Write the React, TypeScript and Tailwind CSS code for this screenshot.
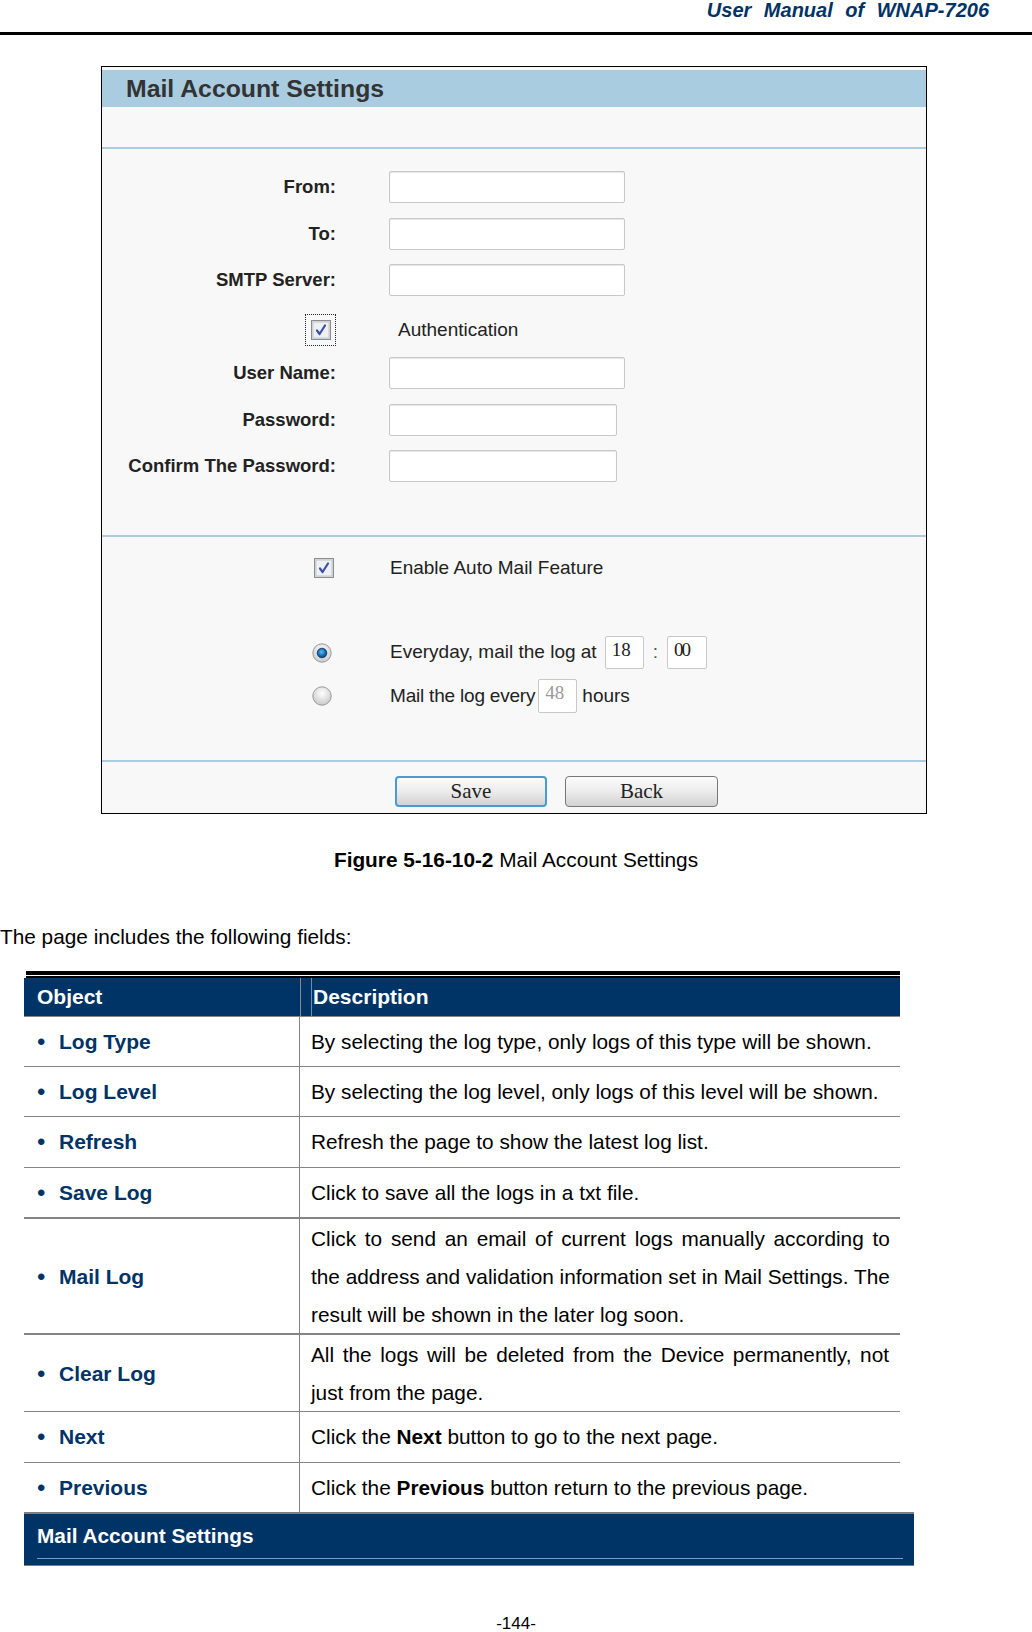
import React from "react";

const Checkbox = () => (
  <svg width="20" height="20" viewBox="0 0 20 20" className="block">
    <rect x="0.5" y="0.5" width="19" height="19" fill="#dcdcdc" stroke="#8c8c8c" />
    <rect x="2" y="2" width="16" height="16" fill="#eef0f6" stroke="#c4c6cc" />
    <path d="M6 10.5 L8.6 14 L14 5.5" fill="none" stroke="#3a50a8" strokeWidth="2.2" strokeLinecap="round" strokeLinejoin="round" />
  </svg>
);

const Radio = ({ on }: { on: boolean }) => (
  <svg width="20" height="20" viewBox="0 0 20 20" className="block">
    <defs>
      <radialGradient id={on ? "rgOn" : "rgOff"} cx="50%" cy="35%" r="65%">
        <stop offset="0%" stopColor="#ffffff" />
        <stop offset="100%" stopColor="#c9c9c9" />
      </radialGradient>
      <radialGradient id="rgDot" cx="45%" cy="40%" r="60%">
        <stop offset="0%" stopColor="#5ec0f0" />
        <stop offset="60%" stopColor="#1670b8" />
        <stop offset="100%" stopColor="#0a3f72" />
      </radialGradient>
    </defs>
    <circle cx="10" cy="10" r="9.2" fill={on ? "url(#rgOn)" : "url(#rgOff)"} stroke="#9a9a9a" strokeWidth="1" />
    {on && <circle cx="10" cy="10" r="4.8" fill="url(#rgDot)" stroke="#0a2f5a" strokeWidth="0.8" />}
  </svg>
);

const Field = ({ w = 236 }: { w?: number }) => (
  <div
    className={`h-[32px] rounded-[2px] border border-[#c8c8c8] bg-white shadow-[inset_0_1px_1px_rgba(0,0,0,0.10)] ${
      w === 236 ? "w-[236px]" : "w-[228px]"
    }`}
  />
);

const FormRow = ({ label, w }: { label: string; w?: number }) => (
  <div className="grid h-[46.5px] grid-cols-[234px_1fr] items-center gap-x-[53px]">
    <div className="whitespace-nowrap text-right text-[18.5px] font-bold text-[#222]">{label}</div>
    <Field w={w} />
  </div>
);

type RowProps = {
  h: string;
  thick?: boolean;
  name: string;
  children: React.ReactNode;
  multi?: boolean;
};

const Name = ({ name }: { name: string }) => (
  <div className="flex items-center border-r border-[#858585] pl-[13px]">
    <span className="w-[22px] text-[24px] leading-[20px] text-[#003366]">•</span>
    <span className="text-[21px] font-bold text-[#003366]">{name}</span>
  </div>
);

const TRow = ({ h, thick, name, children, multi }: RowProps) => (
  <div
    className={`grid grid-cols-[276px_1fr] ${h} ${thick ? "border-b-2" : "border-b"} border-[#858585]`}
  >
    <Name name={name} />
    <div
      className={`pl-[11px] pr-[11px] text-[20.8px] text-black ${
        multi ? "pt-[1px] leading-[38px]" : "flex items-center"
      }`}
    >
      {children}
    </div>
  </div>
);

const J = ({ children }: { children: React.ReactNode }) => (
  <div className="whitespace-nowrap text-justify [text-align-last:justify]">{children}</div>
);

export default function App() {
  return (
    <div className="relative h-[1632px] w-[1032px] overflow-hidden bg-white font-['Liberation_Sans',Arial,sans-serif] text-black">
      {/* page header */}
      <div className="flex h-[32px] items-start justify-end pr-[43px]">
        <span className="text-[20px] font-bold italic leading-[21px] text-[#003366] [word-spacing:7px]">
          User Manual of WNAP-7206
        </span>
      </div>
      <div className="h-[3px] bg-black" />

      {/* figure */}
      <div className="pl-[101px] pt-[31px]">
        <div className="flex h-[748px] w-[826px] flex-col border border-black bg-[#f8f8f8]">
          <div className="mt-[3px] flex h-[37px] items-center bg-[#a9cce0] pl-[24px]">
            <span className="text-[24.8px] font-bold text-[#333]">Mail Account Settings</span>
          </div>
          <div className="h-[40px]" />
          <div className="h-[2px] bg-[#a9cce0]" />

          <div className="pt-[15px]">
            <FormRow label="From:" />
            <FormRow label="To:" />
            <FormRow label="SMTP Server:" />
            <div className="grid h-[46.5px] grid-cols-[234px_1fr] items-center gap-x-[53px]">
              <div className="flex justify-end pt-[6px]">
                <div className="flex h-[32px] w-[31px] items-center justify-center border border-dotted border-[#222]">
                  <Checkbox />
                </div>
              </div>
              <div className="pl-[9px] pt-[6px] text-[19px] text-[#222]">Authentication</div>
            </div>
            <FormRow label="User Name:" />
            <FormRow label="Password:" w={228} />
            <FormRow label="Confirm The Password:" w={228} />
          </div>
          <div className="h-[45.5px]" />
          <div className="h-[2px] bg-[#a9cce0]" />

          <div className="pt-[15px]">
            <div className="grid h-[32px] grid-cols-[234px_1fr] items-center gap-x-[53px]">
              <div className="flex justify-end pr-[2px]">
                <Checkbox />
              </div>
              <div className="pl-[1px] text-[19px] text-[#222]">Enable Auto Mail Feature</div>
            </div>
            <div className="mt-[52px] grid h-[33px] grid-cols-[234px_1fr] items-center gap-x-[53px]">
              <div className="flex justify-end pr-[4px]">
                <Radio on />
              </div>
              <div className="flex items-center pl-[1px] text-[19px] text-[#222]">
                <span>Everyday, mail the log at</span>
                <div className="ml-[8px] flex h-[33px] w-[39px] items-start rounded-[2px] border border-[#c8c8c8] bg-white pl-[6px] pt-[1px] font-['Liberation_Serif',serif] text-[19px] leading-[24px] text-[#222]">
                  18
                </div>
                <span className="ml-[9px] mr-[9px] text-[#555]">:</span>
                <div className="flex h-[33px] w-[40px] items-start rounded-[2px] border border-[#c8c8c8] bg-white pl-[6px] pt-[1px] font-['Liberation_Serif',serif] text-[19px] leading-[24px] tracking-[-2px] text-[#222]">
                  00
                </div>
              </div>
            </div>
            <div className="mt-[10px] grid h-[34px] grid-cols-[234px_1fr] items-center gap-x-[53px]">
              <div className="flex justify-end pr-[4px]">
                <Radio on={false} />
              </div>
              <div className="flex items-center pl-[1px] text-[19px] text-[#222]">
                <span className="tracking-[-0.2px]">Mail the log every</span>
                <div className="ml-[3px] flex h-[34px] w-[39px] items-start rounded-[2px] border border-[#c8c8c8] bg-white pl-[6px] pt-[1px] font-['Liberation_Serif',serif] text-[19px] leading-[24px] text-[#999]">
                  48
                </div>
                <span className="ml-[5px]">hours</span>
              </div>
            </div>
          </div>
          <div className="h-[47px]" />
          <div className="h-[2px] bg-[#a9cce0]" />
          <div className="flex gap-[18px] pl-[293px] pt-[14px]">
            <div className="flex h-[31px] w-[152px] items-center justify-center rounded-[4px] border-2 border-[#4a9ad6] bg-linear-to-b from-[#fbfbfb] via-[#ececec] to-[#d2d2d2] font-['Liberation_Serif',serif] text-[21px] text-[#222]">
              Save
            </div>
            <div className="flex h-[31px] w-[153px] items-center justify-center rounded-[4px] border border-[#777] bg-linear-to-b from-[#fbfbfb] via-[#ececec] to-[#d2d2d2] font-['Liberation_Serif',serif] text-[21px] text-[#222]">
              Back
            </div>
          </div>
        </div>
      </div>

      {/* caption */}
      <div className="mt-[35px] text-center text-[20.8px] leading-[22px]">
        <span className="font-bold">Figure 5-16-10-2</span> Mail Account Settings
      </div>

      <div className="mt-[55px] text-[20.8px] leading-[22px]">The page includes the following fields:</div>

      {/* table */}
      <div className="ml-[24px] mt-[23px] w-[876px]">
        <div className="ml-[2px] h-[4px] bg-black" />
        <div className="h-[1px]" />
        <div className="ml-[2px] h-[2px] bg-black" />
        <div className="grid h-[38px] grid-cols-[276px_1fr] bg-[#003366] text-[21px] font-bold text-white">
          <div className="flex items-center pl-[13px]">Object</div>
          <div className="flex items-stretch border-l border-[#8a8a8a]">
            <div className="ml-[10px] flex items-center border-l border-[#6d8db3] pl-[1px]">Description</div>
          </div>
        </div>
        <div className="h-[1px] bg-[#858585]" />

        <TRow h="h-[50px]" name="Log Type">
          By selecting the log type, only logs of this type will be shown.
        </TRow>
        <TRow h="h-[50px]" name="Log Level">
          By selecting the log level, only logs of this level will be shown.
        </TRow>
        <TRow h="h-[51px]" name="Refresh">
          Refresh the page to show the latest log list.
        </TRow>
        <TRow h="h-[51px]" thick name="Save Log">
          Click to save all the logs in a txt file.
        </TRow>
        <TRow h="h-[116px]" thick multi name="Mail Log">
          <J>Click to send an email of current logs manually according to</J>
          <J>the address and validation information set in Mail Settings. The</J>
          <div className="whitespace-nowrap">result will be shown in the later log soon.</div>
        </TRow>
        <TRow h="h-[77px]" multi name="Clear Log">
          <J>All the logs will be deleted from the Device permanently, not</J>
          <div className="whitespace-nowrap">just from the page.</div>
        </TRow>
        <TRow h="h-[51px]" name="Next">
          <span>
            Click the <b>Next</b> button to go to the next page.
          </span>
        </TRow>
        <div className="grid h-[49px] grid-cols-[276px_1fr]">
          <Name name="Previous" />
          <div className="flex items-center pl-[11px] text-[20.8px]">
            <span>
              Click the <b>Previous</b> button return to the previous page.
            </span>
          </div>
        </div>
      </div>

      {/* bottom bar */}
      <div className="ml-[24px] flex h-[54px] w-[890px] flex-col border-t-2 border-b border-[#7f7f7f] bg-[#003366]">
        <div className="flex h-[44px] items-center pl-[13px] text-[20.8px] font-bold text-white">
          Mail Account Settings
        </div>
        <div className="ml-[13px] mr-[11px] h-px bg-[#7d9cc0]" />
      </div>

      <div className="mt-[49px] text-center text-[17px] leading-[17px]">-144-</div>
    </div>
  );
}
